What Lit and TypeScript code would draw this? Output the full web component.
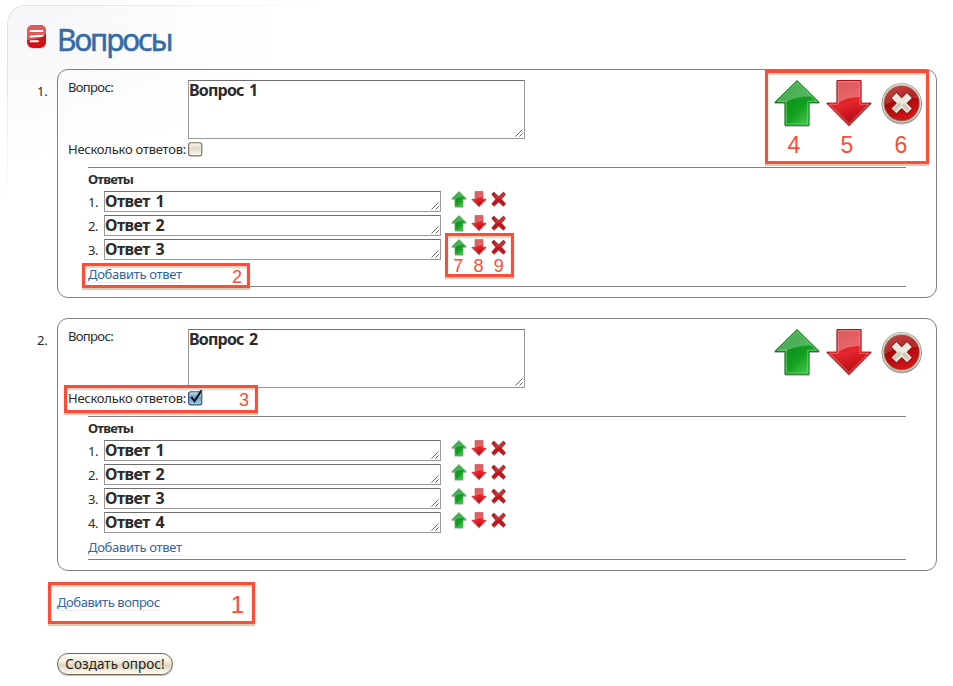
import { LitElement, html, svg, css } from "lit";
import { customElement, property } from "lit/decorators.js";

interface Question {
  title: string;
  multiple: boolean;
  answers: string[];
}

const QUESTIONS: Question[] = [
  { title: "Вопрос 1", multiple: false, answers: ["Ответ 1", "Ответ 2", "Ответ 3"] },
  { title: "Вопрос 2", multiple: true, answers: ["Ответ 1", "Ответ 2", "Ответ 3", "Ответ 4"] },
];

const gradients = svg`
  <defs>
    <linearGradient id="green" x1="0" y1="0" x2="1" y2="1">
      <stop offset="0.2" stop-color="#078a14"/><stop offset="0.6" stop-color="#13a022"/><stop offset="0.95" stop-color="#55d957"/>
    </linearGradient>
    <linearGradient id="red" x1="0" y1="0" x2="0.3" y2="1">
      <stop offset="0" stop-color="#c40f18"/><stop offset="0.6" stop-color="#e5262b"/><stop offset="1" stop-color="#b80d14"/>
    </linearGradient>
    <linearGradient id="disc" x1="0" y1="0" x2="0.4" y2="1">
      <stop offset="0" stop-color="#b8302c"/><stop offset="0.5" stop-color="#a90508"/><stop offset="1" stop-color="#d4151a"/>
    </linearGradient>
  </defs>`;

@customElement("action-icon")
export class ActionIcon extends LitElement {
  @property() kind = "up";
  @property({ type: Boolean }) large = false;

  static styles = css`
    :host { display: block; width: 16px; height: 16px; }
    :host([large]) { width: 48px; height: 48px; }
    svg { display: block; width: 100%; height: 100%; overflow: visible; filter: drop-shadow(0.5px 1px 0.6px rgba(0, 0, 0, 0.3)); }
  `;

  private shape() {
    if (this.kind === "up") {
      return svg`
        <path d="M24 1.6 46.2 23.4H36V46.2H12V23.4H1.8Z" fill="url(#green)" stroke="#0b7a18" stroke-width="1"/>
        <path d="M24 2.8 39.5 17.6Q26 17 12.8 23H4.2Z" fill="#fff" opacity=".27"/>
        <path d="M24 3.2 43.6 22.3H34.8V45H13.2V22.3H4.4Z" fill="none" stroke="#8be08c" stroke-width=".9" opacity=".7"/>`;
    }
    if (this.kind === "down") {
      return svg`
        <path d="M24 46.4 46.2 24.1H36V1.5H12V24.1H1.8Z" fill="url(#red)" stroke="#a90d15" stroke-width="1"/>
        <path d="M12.8 2H35.2V18Q22 18 12.8 24Z" fill="#fff" opacity=".3"/>
        <path d="M24 44.7 43.6 25.2H34.8V2.7H13.2V25.2H4.4Z" fill="none" stroke="#f59a98" stroke-width=".9" opacity=".7"/>`;
    }
    if (this.large) {
      return svg`
        <circle cx="24.7" cy="24.3" r="18.7" fill="url(#disc)" stroke="#8f8977" stroke-width="2.8"/>
        <circle cx="24.7" cy="24.3" r="18.8" fill="none" stroke="#dedacd" stroke-width="1.3"/>
        <path d="M7.7 26A17 17 0 0 1 41 19Q22 18 7.7 26Z" fill="#fff" opacity=".14"/>
        <path d="M16.5 16 32.9 32.4M32.9 16 16.5 32.4" stroke="#7d1512" stroke-width="8.2" fill="none"/>
        <path d="M17 16.5 32.4 31.9M32.4 16.5 17 31.9" stroke="#ece8dd" stroke-width="6.8" fill="none"/>
        <path d="M17 31 23.5 24.5M26 25.5 31.5 31" stroke="#cfc9b9" stroke-width="3.4" fill="none"/>`;
    }
    return svg`
      <path d="M8.5 3 23 16.5 37 3 43.5 9 31 24 44 38 37 45 23 32 9.5 45 2 38 14.5 24 2 9Z" fill="#c01218" stroke="#a60c12" stroke-width="1.2"/>
      <path d="M9 5 23 18 37 5 41 9.5 29 23H15Z" fill="#fff" opacity=".14"/>`;
  }

  render() {
    return html`<svg viewBox="0 0 48 48">${gradients}${this.shape()}</svg>`;
  }
}

@customElement("text-field")
export class TextField extends LitElement {
  @property() value = "";

  static styles = css`
    :host { display: block; box-sizing: border-box; position: relative; width: 337px; border: 1px solid #999; border-top-color: #6e6e6e; background: #fff;
      font: bold 16px/19px "Noto Sans", sans-serif; letter-spacing: var(--tracking, -0.4px); word-spacing: 2px; color: #2b2b2b; white-space: nowrap; }
    .grip { position: absolute; right: 1px; bottom: 1px; width: 8px; height: 8px; }
  `;

  render() {
    return html`${this.value}
      <svg class="grip" viewBox="0 0 8 8"><path d="M.5 7.5 7.5.5M4.5 7.5 7.5 4.5" stroke="#555" stroke-width=".9"/></svg>`;
  }
}

@customElement("question-card")
export class QuestionCard extends LitElement {
  @property({ attribute: false }) question!: Question;

  static styles = css`
    :host { display: block; box-sizing: border-box; width: 880px; border: 1px solid #808080; border-radius: 11px; padding: 10px 0 10px 10px;
      font: 13px/16px "Noto Sans", sans-serif; color: #2b2b2b; }
    .top { display: flex; height: 60px; }
    .label { width: 120px; letter-spacing: -0.65px; line-height: 15px; }
    text-field.big { height: 59px; --tracking: -0.8px; }
    .actions { display: flex; gap: 4px; margin: -1px 0 0 248px; }
    .multi { display: flex; align-items: center; height: 18px; letter-spacing: -0.25px; }
    .multi-label { width: 120px; white-space: nowrap; }
    .check { width: 15px; height: 15px; overflow: visible; }
    .answers { margin: 9px 0 0 20px; width: 818px; border: solid #808080; border-width: 1px 0; box-sizing: border-box; }
    .title { font-weight: bold; line-height: 23px; height: 23px; letter-spacing: -0.75px; }
    .row { display: flex; height: 24px; --tracking: -0.5px; }
    .num { width: 16px; line-height: 22px; letter-spacing: -0.5px; }
    .row text-field { height: 21px; }
    .tools { display: flex; gap: 4px; margin-left: 10px; }
    .add { display: flex; align-items: flex-start; height: 23px; padding-top: 2px; box-sizing: border-box; }
    .link { color: #2f66a3; border-bottom: 1px dotted #ddd; line-height: 18px; height: 18px; box-sizing: border-box; letter-spacing: -0.32px; }
  `;

  render() {
    const q = this.question;
    return html`
      <div class="top">
        <div class="label">Вопрос:</div>
        <text-field class="big" .value=${q.title}></text-field>
        <div class="actions">
          <action-icon large kind="up"></action-icon>
          <action-icon large kind="down"></action-icon>
          <action-icon large kind="delete"></action-icon>
        </div>
      </div>
      <div class="multi">
        <span class="multi-label">Несколько ответов:</span>
        <svg class="check" viewBox="0 0 15 15">
          <defs>
            <linearGradient id="box" x1="0" y1="0" x2="0" y2="1">
              <stop offset="0" stop-color=${q.multiple ? "#c5dcee" : "#fbf9f3"}/>
              <stop offset=".45" stop-color=${q.multiple ? "#6c9fc8" : "#e2dac8"}/>
              <stop offset="1" stop-color=${q.multiple ? "#9fd5f2" : "#fffdf7"}/>
            </linearGradient>
          </defs>
          <rect x=".6" y=".7" width="13.2" height="13.2" rx="2.3" fill="url(#box)" stroke=${q.multiple ? "#37516f" : "#77705f"} stroke-width="1.1"/>
          ${q.multiple ? svg`<path d="M3.3 5.8 6.5 10.3 13.8-1.2" fill="none" stroke="#111" stroke-width="2"/>` : null}
        </svg>
      </div>
      <div class="answers">
        <div class="title">Ответы</div>
        ${q.answers.map((a, i) => html`
          <div class="row">
            <span class="num">${i + 1}.</span>
            <text-field .value=${a}></text-field>
            <div class="tools">
              <action-icon kind="up"></action-icon>
              <action-icon kind="down"></action-icon>
              <action-icon kind="delete"></action-icon>
            </div>
          </div>`)}
        <div class="add"><span class="link">Добавить ответ</span></div>
      </div>`;
  }
}

@customElement("app-root")
export class AppRoot extends LitElement {
  static styles = css`
    :host { display: block; box-sizing: border-box; position: relative; width: 953px; height: 686px; overflow: hidden; background: #fff;
      font: 13px/16px "Noto Sans", sans-serif; color: #2b2b2b; }
    .glow { position: absolute; left: 7px; top: 5px; width: 400px; height: 200px; border: 1px solid #e2e2e6; border-width: 1px 0 0 1px; border-radius: 18px 0 0 0;
      background: radial-gradient(ellipse 330px 180px at 0 0, #f6f6f9, #fff);
      mask-image: linear-gradient(to right, #000 20%, transparent 80%), linear-gradient(#000 30%, transparent); mask-composite: intersect; }
    .page { position: relative; padding: 22px 0 0 26px; }
    .head { display: flex; height: 47px; }
    .logo { width: 21px; height: 25px; margin: 3px 10px 0 0; }
    h1 { margin: 0; font: 30px/36px "Noto Sans", sans-serif; letter-spacing: -2.1px; color: #336ba5; -webkit-text-stroke: 0.5px #336ba5; }
    .item { display: flex; margin-bottom: 20px; }
    .index { width: 20px; padding: 14px 0 0 11px; letter-spacing: -0.1px; }
    .foot { margin-left: 31px; }
    .link { display: inline-block; color: #2f66a3; border-bottom: 1px dotted #ddd; line-height: 18px; height: 17px; margin-top: 2px; letter-spacing: -0.43px; }
    .submit { display: flex; align-items: center; justify-content: center; box-sizing: border-box; width: 116px; height: 22px; margin: 42px 0 0; padding: 0 0 1px;
      border: 1.5px solid #6f6857; border-radius: 11px; background: linear-gradient(#fefdf9, #f1ecdf 40%, #ddd5bf 55%, #fffdf7);
      box-shadow: 0 1px 1px #bbb; font: 13.5px/16px "Noto Sans", sans-serif; color: #222; letter-spacing: 0.05px; white-space: nowrap; }
    .mark { position: absolute; box-sizing: border-box; border: 3px solid #ff4b38; box-shadow: 0 2px 1px #d4ccb5, inset 0 2px 2px #d8d0ba;
      display: flex; align-items: flex-end; justify-content: flex-end; color: #ff4b38; font: 18px/16px "Liberation Sans", sans-serif; }
    .mark span { text-align: center; }
    .m1 { left: 48px; top: 582px; width: 207px; height: 42px; font-size: 24px; line-height: 24px; padding: 0 8px 4px 0; }
    .m2 { left: 82px; top: 263px; width: 168px; height: 25px; padding: 0 5px 0 0; }
    .m3 { left: 64px; top: 385px; width: 194px; height: 28px; padding: 0 6px 2px 0; }
    .m4 { left: 765px; top: 70px; width: 164px; height: 94px; font-size: 23px; line-height: 24px; padding-bottom: 4px; }
    .m4 span:nth-child(1) { width: 48px; }
    .m4 span:nth-child(2) { width: 58px; }
    .m4 span:nth-child(3) { width: 50px; }
    .m7 { left: 445px; top: 233px; width: 69px; height: 44px; padding-right: 2px; }
    .m7 span { width: 20.5px; }
  `;

  render() {
    return html`
      <div class="glow"></div>
      <div class="page">
        <div class="head">
          <svg class="logo" viewBox="0 0 21 25">
            <rect x="1" y="1.5" width="19" height="22.5" rx="6" fill="#bbb" opacity=".5"/>
            <rect x="1" y="0" width="19" height="23" rx="6" fill="#cf1215"/>
            <path d="M1 15V6Q1 0 7 0H14Q20 0 20 6V9Q17 14 1 15Z" fill="#e05a5c"/>
            <path d="M4.5 6H16.5M4.5 11.5 16.5 10.7M4.5 16.2H12" stroke="#fff" stroke-width="1.9" stroke-linecap="round"/>
          </svg>
          <h1>Вопросы</h1>
        </div>
        ${QUESTIONS.map((q, i) => html`
          <div class="item">
            <div class="index">${i + 1}.</div>
            <question-card .question=${q}></question-card>
          </div>`)}
        <div class="foot">
          <span class="link">Добавить вопрос</span>
          <button class="submit">Создать опрос!</button>
        </div>
      </div>
      <div class="mark m1"><span>1</span></div>
      <div class="mark m2"><span>2</span></div>
      <div class="mark m3"><span>3</span></div>
      <div class="mark m4"><span>4</span><span>5</span><span>6</span></div>
      <div class="mark m7"><span>7</span><span>8</span><span>9</span></div>`;
  }
}
